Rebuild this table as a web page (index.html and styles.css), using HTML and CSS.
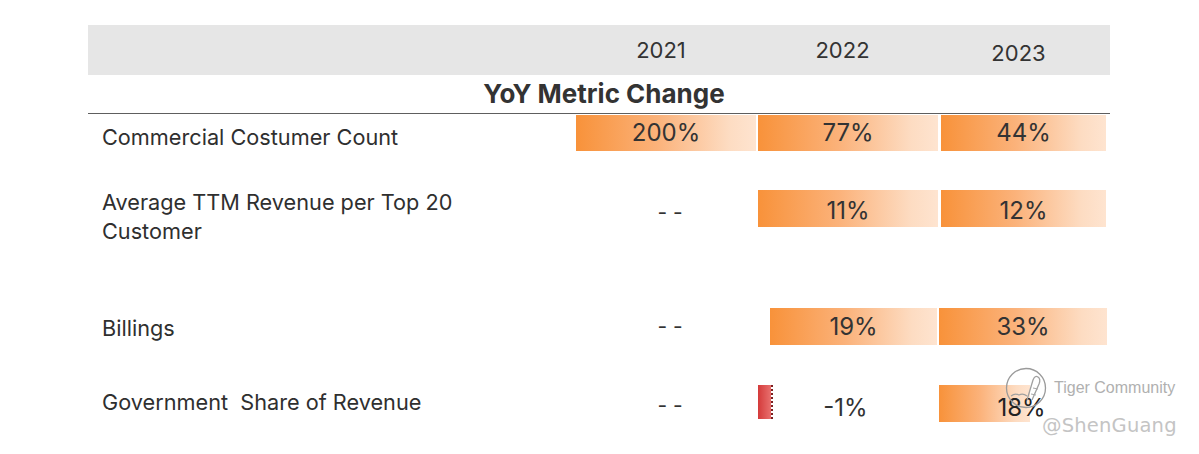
FILE: index.html
```html
<!DOCTYPE html>
<html>
<head>
<meta charset="utf-8">
<link rel="stylesheet" href="styles.css">
</head>
<body>
<div class="sheet">
  <div class="head">
    <div></div>
    <div class="yr">2021</div>
    <div class="yr">2022</div>
    <div class="yr yr3">2023</div>
  </div>
  <div class="title">YoY Metric Change</div>

  <div class="row r1">
    <div class="label">Commercial Costumer Count</div>
    <div class="cell"><div class="bar w180">200%</div></div>
    <div class="cell"><div class="bar w180">77%</div></div>
    <div class="cell"><div class="bar w165 ml2">44%</div></div>
  </div>

  <div class="row r2">
    <div class="label">Average TTM Revenue per Top 20<br>Customer</div>
    <div class="cell"><div class="none">- -</div></div>
    <div class="cell"><div class="bar w180 low">11%</div></div>
    <div class="cell"><div class="bar w165 ml2 low">12%</div></div>
  </div>

  <div class="row r3">
    <div class="label">Billings</div>
    <div class="cell"><div class="none">- -</div></div>
    <div class="cell"><div class="bar w167 ml12">19%</div></div>
    <div class="cell"><div class="bar w168">33%</div></div>
  </div>

  <div class="row r4">
    <div class="label">Government&nbsp; Share of Revenue</div>
    <div class="cell"><div class="none">- -</div></div>
    <div class="cell"><div class="neg">-1%</div></div>
    <div class="cell"><div class="part">18%</div></div>
  </div>
</div>

<div class="wm">
  <svg class="wm-logo" width="44" height="46" viewBox="0 0 44 46">
    <circle cx="21" cy="22" r="19.5" fill="none" stroke="#9a9a9a" stroke-width="1.3"/>
    <path d="M22 34 L28 14 Q30 9 33 11 Q36 13 34 18 L27 34" fill="none" stroke="#a0a0a0" stroke-width="1.3"/>
    <path d="M28 22 L33 23 M26 28 L31 29" fill="none" stroke="#a8a8a8" stroke-width="1"/>
    <path d="M6 30 Q10 27 14 29 Q18 27 22 30" fill="none" stroke="#a0a0a0" stroke-width="1.2"/>
  </svg>
  <div class="wm-text">
    <div class="wm-small">Tiger Community</div>
    <div class="wm-big">@ShenGuang</div>
  </div>
</div>
</body>
</html>
```

FILE: styles.css
```css
html, body {
  margin: 0;
  padding: 0;
  background: #ffffff;
}

body {
  width: 1199px;
  height: 454px;
  overflow: hidden;
  position: relative;
  font-family: "Inter", "Open Sans", sans-serif;
  color: #333333;
}

.sheet {
  margin-left: 88px;
  padding-top: 25px;
  width: 1022px;
}

.head {
  display: grid;
  grid-template-columns: 488px 182px 181px 171px;
  height: 50px;
  background: #e6e6e6;
}

.yr {
  font-size: 22px;
  line-height: 50px;
  text-align: center;
  padding-right: 12px;
  color: #333;
}

.yr3 {
  padding-top: 3px;
}

.title {
  height: 38px;
  line-height: 38px;
  text-align: center;
  padding-left: 10px;
  font-size: 26px;
  font-weight: 700;
  color: #333;
  border-bottom: 1px solid #5e5e5e;
}

.row {
  display: grid;
  grid-template-columns: 488px 182px 181px 171px;
  grid-template-rows: 37px;
  height: 37px;
}

.r1 { margin-top: 1px; }
.r2 { margin-top: 38px; }
.r3 { margin-top: 81px; }
.r4 { margin-top: 40px; }

.label {
  padding-left: 14px;
  font-size: 21.7px;
  line-height: 29px;
  white-space: nowrap;
  color: #2f2f2f;
}

.r1 .label { padding-top: 8px; }
.r2 .label { margin-top: -2px; }
.r3 .label { padding-top: 6px; }
.r4 .label { padding-top: 3px; }

.cell {
  display: flex;
  height: 37px;
}

.bar {
  height: 37px;
  line-height: 37px;
  text-align: center;
  font-size: 24px;
  color: #333;
  background: linear-gradient(to right, #f8923a 0%, #fbb27a 45%, #fddcc2 85%, #fee4d0 100%);
}

.r1 .bar { height: 36px; line-height: 36px; }

.low { line-height: 41px; }

.w180 { width: 180px; }
.w165 { width: 165px; }
.w167 { width: 167px; }
.w168 { width: 168px; }
.ml2 { margin-left: 2px; }
.ml12 { margin-left: 12px; }

.none {
  width: 100%;
  padding-left: 6px;
  text-align: center;
  font-size: 21px;
  line-height: 37px;
  color: #333;
  padding-top: 4px;
}

.r3 .none { padding-top: 0; }
.r4 .none { padding-top: 2px; }

.neg {
  width: 100%;
  text-align: center;
  padding-right: 6px;
  font-size: 24px;
  line-height: 37px;
  padding-top: 4px;
  color: #333;
  background:
    linear-gradient(to right, #d43a3a, #e8706e) 0 0 / 13px 34px no-repeat,
    repeating-linear-gradient(to bottom, #7a1e1e 0 2px, transparent 2px 4px) 13px 0 / 2px 34px no-repeat;
}

.part {
  width: 100%;
  text-align: center;
  padding-right: 6px;
  font-size: 24px;
  line-height: 37px;
  padding-top: 4px;
  color: #222;
  background: linear-gradient(to right, #f8923a 0%, #fbb27a 45%, #fddcc2 85%, #fee4d0 100%) 0 0 / 91px 37px no-repeat;
}

.wm {
  position: absolute;
  left: 1005px;
  top: 366px;
  display: flex;
  align-items: flex-start;
}

.wm-logo {
  display: block;
}

.wm-text {
  margin-left: 5px;
}

.wm-small {
  font-family: "Liberation Sans", sans-serif;
  font-size: 16px;
  line-height: 18px;
  margin-top: 13px;
  color: #b0b0b0;
  text-shadow: 0 0 1px #ffffff;
}

.wm-big {
  font-family: "DejaVu Sans", sans-serif;
  font-size: 19.5px;
  line-height: 24px;
  margin-top: 17px;
  margin-left: -12px;
  color: #c4c4c4;
  letter-spacing: 0.2px;
}
```
